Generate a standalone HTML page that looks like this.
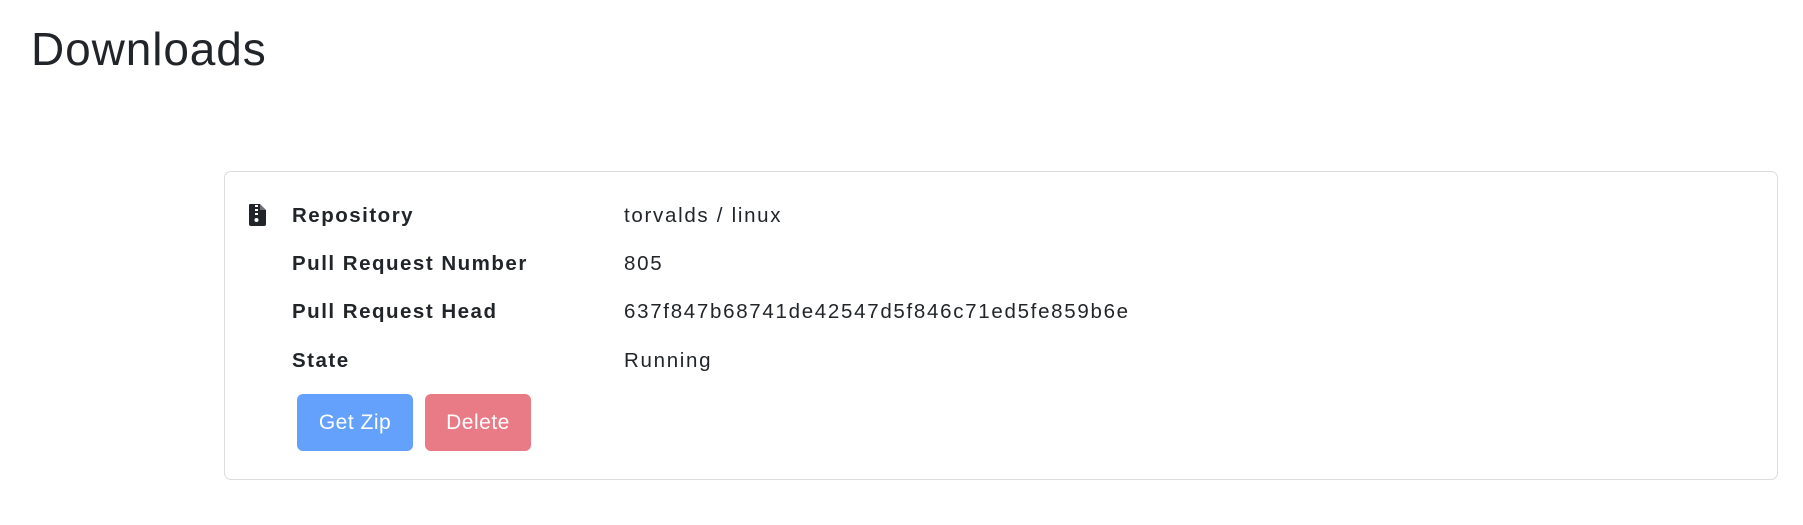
<!DOCTYPE html>
<html><head><style>
body{margin:0;width:1803px;height:525px;background:#fff;font-family:"Liberation Sans",sans-serif;color:#212529;position:relative;overflow:hidden}
h1{position:absolute;left:31px;top:19px;margin:0;font-weight:400;font-size:46px;line-height:60px;letter-spacing:0.9px}
.card{position:absolute;left:224px;top:171px;width:1554px;height:309px;border:1px solid #dcdcdc;border-radius:7px;box-sizing:border-box}
.row{position:absolute;font-size:20.5px;line-height:24px}
.l{left:292px;font-weight:bold;letter-spacing:1.5px}
.v{left:624px;letter-spacing:1.7px}
.btn{position:absolute;top:394px;height:57px;border-radius:6px;color:#fff;font-size:21px;line-height:57px;text-align:center;letter-spacing:0.5px}
</style></head><body>
<h1>Downloads</h1>
<div class="card"></div>
<svg style="position:absolute;left:249px;top:204px" width="17" height="22" viewBox="0 0 17 22">
<path d="M1 0h10l6 6v14a2 2 0 0 1-2 2H2a2 2 0 0 1-2-2V1a1 1 0 0 1 1-1z" fill="#212529"/>
<rect x="6" y="1" width="3" height="2" fill="#fff"/><rect x="6" y="5" width="3" height="2" fill="#fff"/><rect x="6" y="9" width="3" height="2" fill="#fff"/>
<circle cx="7.5" cy="16" r="2" fill="#fff"/><path d="M11 0v6h6" fill="#fff" opacity=".35"/>
</svg>
<div class="row l" style="top:204px">Repository</div><div class="row v" style="top:204px">torvalds / linux</div>
<div class="row l" style="top:252px">Pull Request Number</div><div class="row v" style="top:252px">805</div>
<div class="row l" style="top:300px">Pull Request Head</div><div class="row v" style="top:300px">637f847b68741de42547d5f846c71ed5fe859b6e</div>
<div class="row l" style="top:349px">State</div><div class="row v" style="top:349px">Running</div>
<div class="btn" style="left:297px;width:116px;background:#63a1fd">Get Zip</div>
<div class="btn" style="left:425px;width:106px;background:#e87b86">Delete</div>
</body></html>
